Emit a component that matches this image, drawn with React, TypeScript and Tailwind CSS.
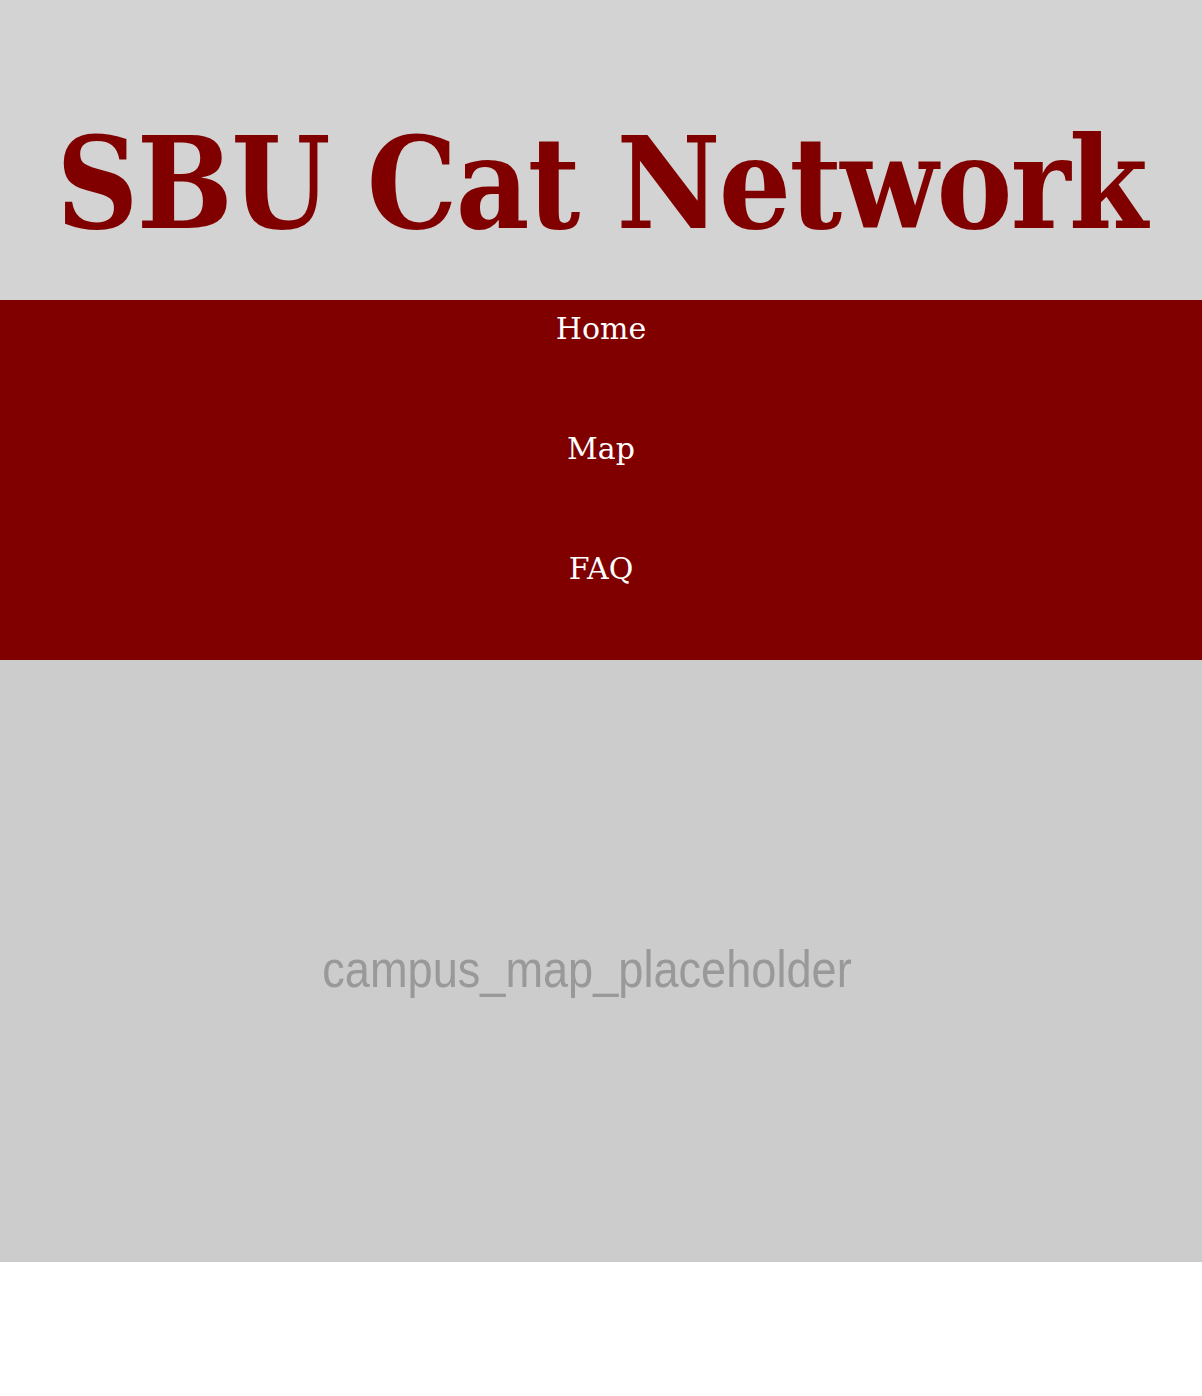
export default function App() {
  const links = ["Home", "Map", "FAQ"];
  return (
    <div className="min-h-[1396px] bg-white">
      {/* Header */}
      <header className="flex h-[300px] items-start justify-center bg-[#d3d3d3] pt-[119px]">
        <h1 className="shrink-0 scale-x-[0.89] whitespace-nowrap text-[128px] font-bold leading-none tracking-[-2px] text-[#800000] [font-family:'DejaVu_Serif',serif]">
          SBU Cat Network
        </h1>
      </header>

      {/* Nav */}
      <nav className="flex flex-col bg-[#800000]">
        {links.map((link) => (
          <a
            key={link}
            href="#"
            className="block h-[120px] pt-[12px] text-center text-[30px] leading-[34px] text-white [font-family:'DejaVu_Serif',serif]"
          >
            {link}
          </a>
        ))}
      </nav>

      {/* Map placeholder */}
      <section className="flex h-[602px] items-center justify-center bg-[#cccccc]">
        <span className="-ml-[28px] mt-[16px] inline-block scale-x-[0.868] text-[52px] leading-none text-[#999999] [font-family:'Liberation_Sans',sans-serif]">
          campus_map_placeholder
        </span>
      </section>
    </div>
  );
}
